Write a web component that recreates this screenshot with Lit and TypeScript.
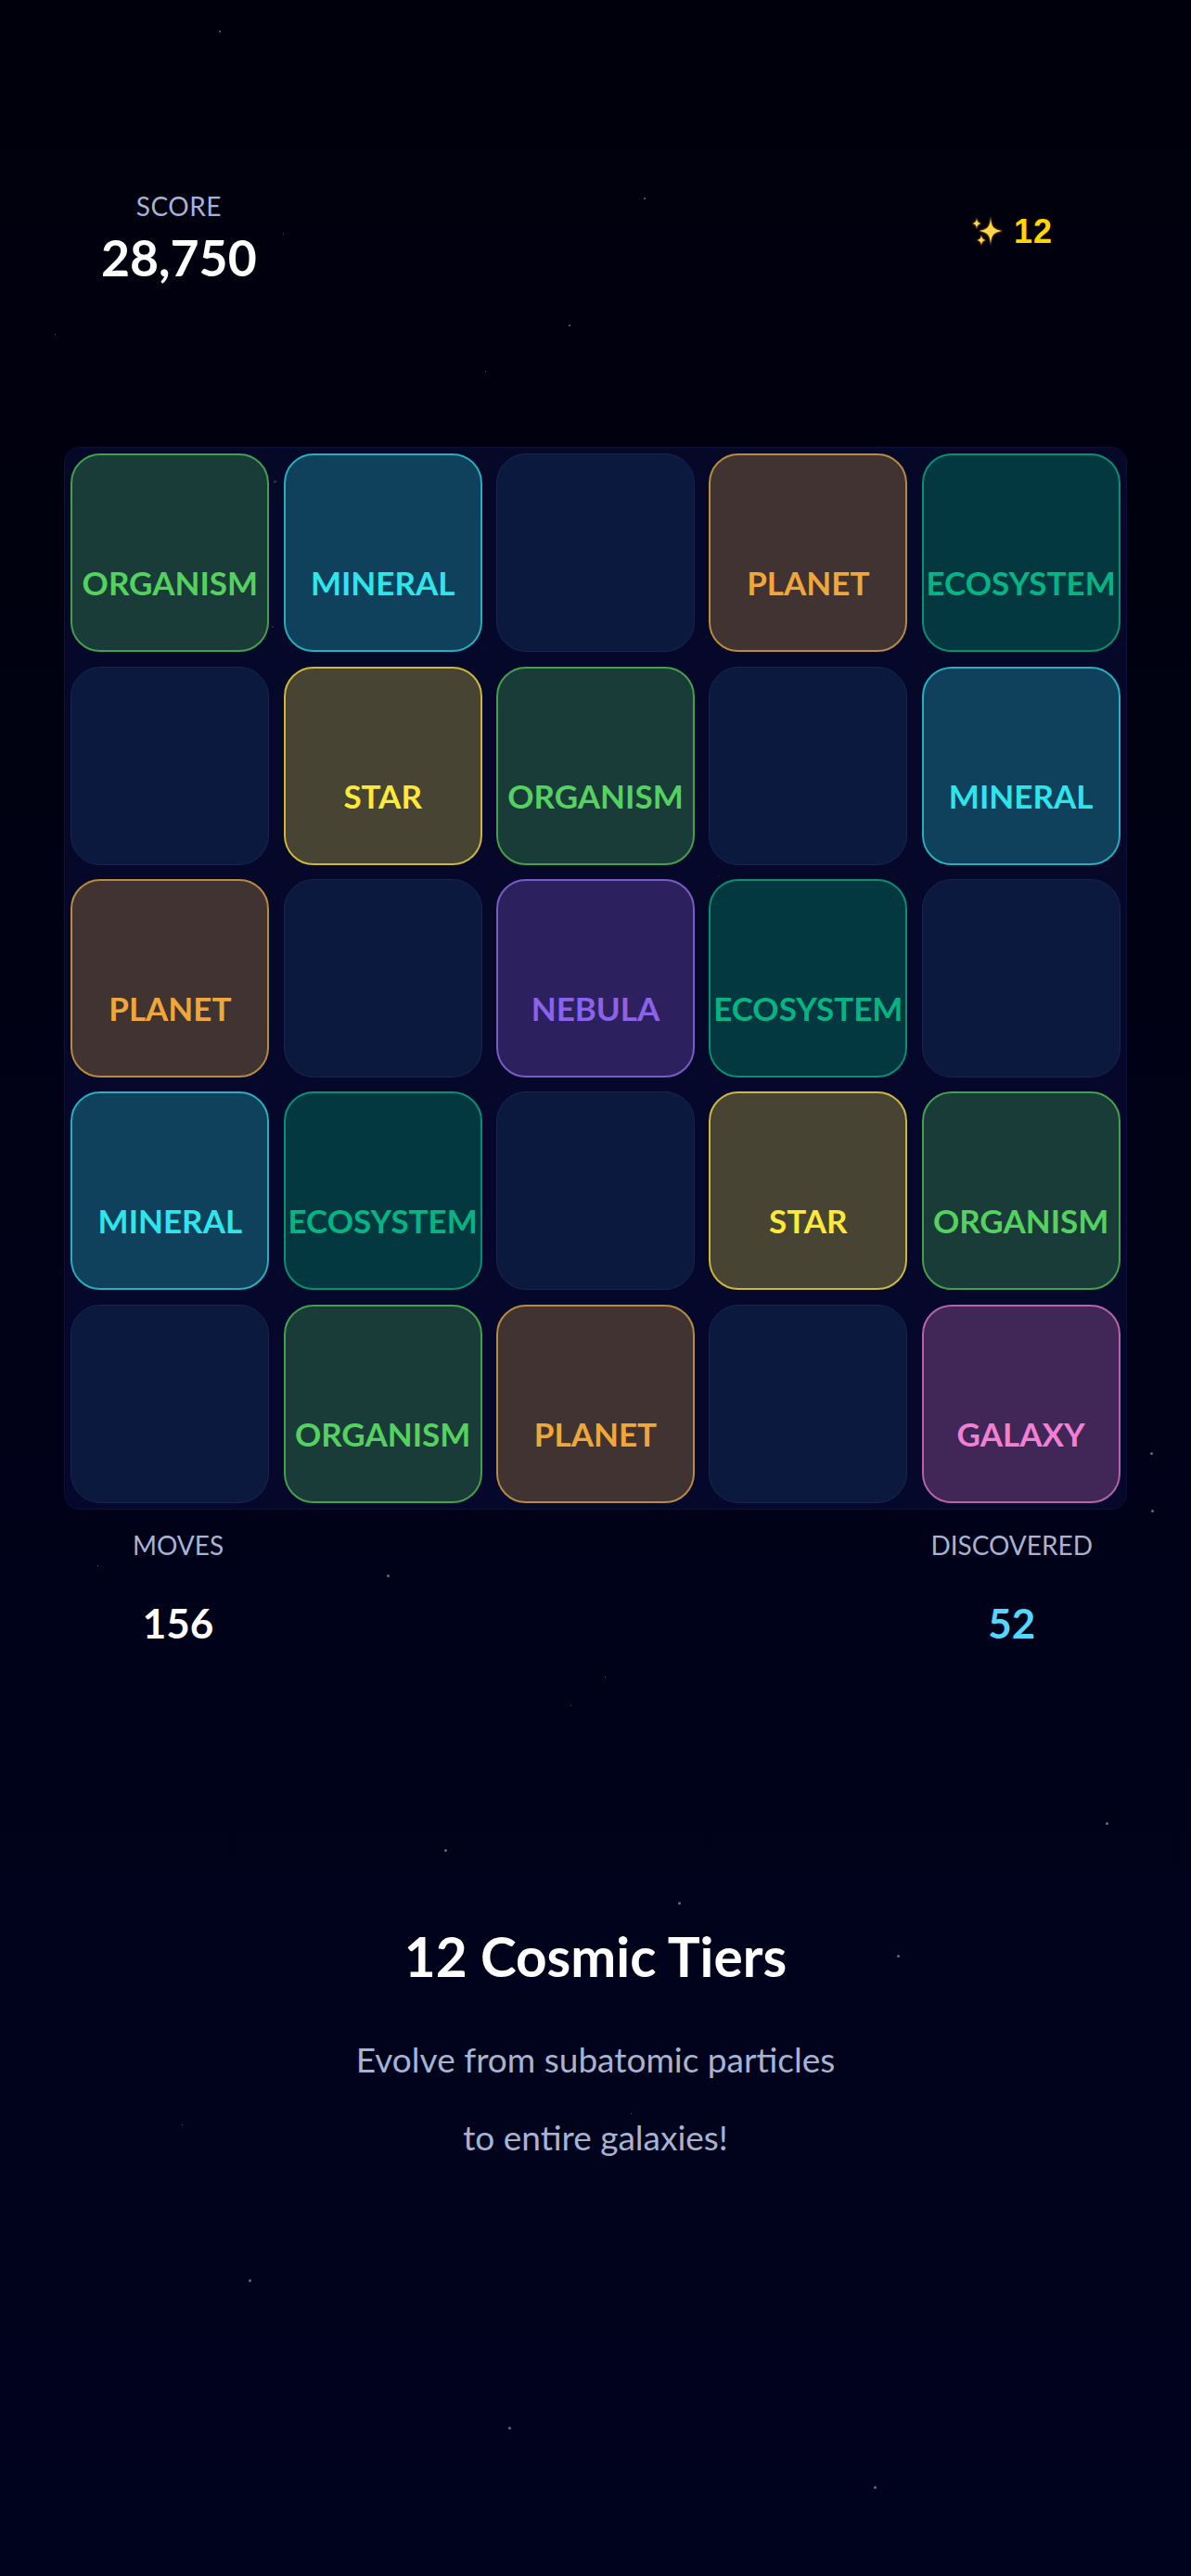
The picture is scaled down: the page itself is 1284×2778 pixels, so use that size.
import { LitElement, html, css } from "lit";
import { customElement } from "lit/decorators.js";

type Tier = "" | "organism" | "mineral" | "planet" | "ecosystem" | "star" | "nebula" | "galaxy";

const BOARD: Tier[] = [
  "organism", "mineral", "", "planet", "ecosystem",
  "", "star", "organism", "", "mineral",
  "planet", "", "nebula", "ecosystem", "",
  "mineral", "ecosystem", "", "star", "organism",
  "", "organism", "planet", "", "galaxy",
];

const STARS: [number, number, number][] = [
  [237, 34, 2], [695, 214, 2], [305, 252, 1], [59, 360, 1], [614, 351, 2], [523, 400, 1],
  [296, 519, 3], [294, 676, 2],
  [1241, 1567, 3], [1242, 1629, 3], [105, 1688, 1], [418, 1699, 3], [652, 1808, 1], [615, 1839, 1],
  [1193, 1966, 3], [480, 1995, 3], [732, 2052, 3], [968, 2109, 3], [196, 2291, 1], [680, 2279, 1],
  [269, 2459, 3], [549, 2618, 3], [943, 2682, 3],
];

@customElement("app-root")
export class AppRoot extends LitElement {
  static styles = css`
    :host {
      display: block;
      width: 1284px;
      height: 2778px;
      overflow: hidden;
      font-family: Lato, "Open Sans", sans-serif;
      color: #fff;
    }
    .page {
      position: relative;
      width: 1284px;
      height: 2778px;
      background: linear-gradient(180deg, #00000d 0%, #00010f 20%, #00021a 65%, #00031e 100%);
      display: flex;
      flex-direction: column;
      box-sizing: border-box;
      padding-top: 201px;
    }
    .star {
      position: absolute;
      border-radius: 50%;
      background: rgba(255, 255, 255, 0.42);
    }
    .hud {
      position: relative;
      display: flex;
      justify-content: space-between;
      align-items: flex-start;
      padding: 0 149px 0 109px;
      height: 98px;
    }
    .stat {
      display: flex;
      flex-direction: column;
      align-items: center;
    }
    .hud .stat {
      margin-top: 4px;
      gap: 6px;
    }
    .hud .label {
      letter-spacing: 0.5px;
    }
    .label {
      font-size: 28px;
      line-height: 34px;
      color: #a8b2d1;
    }
    .score {
      font-size: 53.5px;
      line-height: 64px;
      font-weight: 700;
    }
    .stars-count {
      font-family: "Liberation Sans", sans-serif;
      font-size: 36px;
      letter-spacing: 1px;
      font-weight: 700;
      color: #ffd700;
      display: flex;
      align-items: center;
      gap: 12px;
      align-self: center;
    }
    .stars-count svg {
      display: block;
      filter: drop-shadow(0 0 1px #e08a00);
    }
    .board {
      position: relative;
      margin: 183px 69px 0;
      box-sizing: border-box;
      height: 1146px;
      padding: 6.4px;
      border: 1px solid #0b1036;
      border-radius: 16px;
      background: rgba(8, 13, 57, 0.6);
      display: grid;
      grid-template-columns: repeat(5, 1fr);
      grid-template-rows: repeat(5, 1fr);
      gap: 15.4px;
    }
    .tile {
      box-sizing: border-box;
      border: 2px solid;
      border-radius: 32px;
      display: flex;
      justify-content: center;
      align-items: flex-end;
      padding-bottom: 51px;
      font-size: 35px;
      line-height: 44px;
      font-weight: 700;
      white-space: nowrap;
      min-width: 0;
    }
    .empty { background: #0c193f; border: 1px solid #1a2450; }
    .organism { background: #1a3c39; border-color: #43a04c; color: #55d160; }
    .mineral { background: #0f405c; border-color: #28aebc; color: #2ee6ea; }
    .planet { background: #403331; border-color: #b98b3e; color: #f0a73a; }
    .ecosystem { background: #033840; border-color: #07906f; color: #06b383; }
    .star-t { background: #474433; border-color: #cfb73a; color: #fde93a; }
    .nebula { background: #2c215e; border-color: #7a5cc6; color: #8b63ea; }
    .galaxy { background: #402758; border-color: #b663ac; color: #f17fd2; }
    .footer {
      position: relative;
      display: flex;
      justify-content: space-between;
      padding: 0 106px 0 143px;
      margin-top: 21px;
    }
    .footer .stat { gap: 40px; }
    .footer .value {
      font-size: 44px;
      line-height: 54px;
      font-weight: 700;
    }
    .cyan { color: #55d6ff; }
    .promo {
      position: relative;
      margin-top: 297px;
      text-align: center;
    }
    .promo h1 {
      margin: 0;
      font-size: 58.5px;
      line-height: 70px;
      font-weight: 700;
    }
    .promo p {
      margin: 34.5px 0 0;
      font-size: 37px;
      line-height: 84.5px;
      color: #a8b2d1;
    }
  `;

  private tile(t: Tier) {
    if (!t) return html`<div class="tile empty"></div>`;
    const cls = t === "star" ? "star-t" : t;
    return html`<div class="tile ${cls}">${t.toUpperCase()}</div>`;
  }

  render() {
    return html`
      <div class="page">
        ${STARS.map(
          ([x, y, s]) =>
            html`<div class="star" style="left:${x - s / 2}px;top:${y - s / 2}px;width:${s}px;height:${s}px"></div>`
        )}
        <div class="hud">
          <div class="stat">
            <div class="label">SCORE</div>
            <div class="score">28,750</div>
          </div>
          <div class="stars-count">
            <svg width="34" height="34" viewBox="0 0 34 34" aria-hidden="true">
              <path fill="#ffd84a" d="M21 0c.6 11 2 14.500 13 16-11 1.500-12.400 5-13 16-.6-11-2-14.500-13-16 11-1.500 12.400-5 13-16z" />
              <path fill="#ffd84a" d="M6 1.500c.3 4.500 1 5.800 5 6.500-4 .7-4.700 2-5 6.500-.3-4.500-1-5.800-5-6.500 4-.7 4.700-2 5-6.500z" />
              <path fill="#ffd84a" d="M11 19.500c.3 4.500 1 5.800 5 6.500-4 .7-4.700 2-5 6.500-.3-4.500-1-5.800-5-6.500 4-.7 4.700-2 5-6.500z" />
            </svg>
            <span>12</span>
          </div>
        </div>
        <div class="board">${BOARD.map((t) => this.tile(t))}</div>
        <div class="footer">
          <div class="stat">
            <div class="label">MOVES</div>
            <div class="value">156</div>
          </div>
          <div class="stat">
            <div class="label">DISCOVERED</div>
            <div class="value cyan">52</div>
          </div>
        </div>
        <div class="promo">
          <h1>12 Cosmic Tiers</h1>
          <p>Evolve from subatomic particles<br />to entire galaxies!</p>
        </div>
      </div>
    `;
  }
}
